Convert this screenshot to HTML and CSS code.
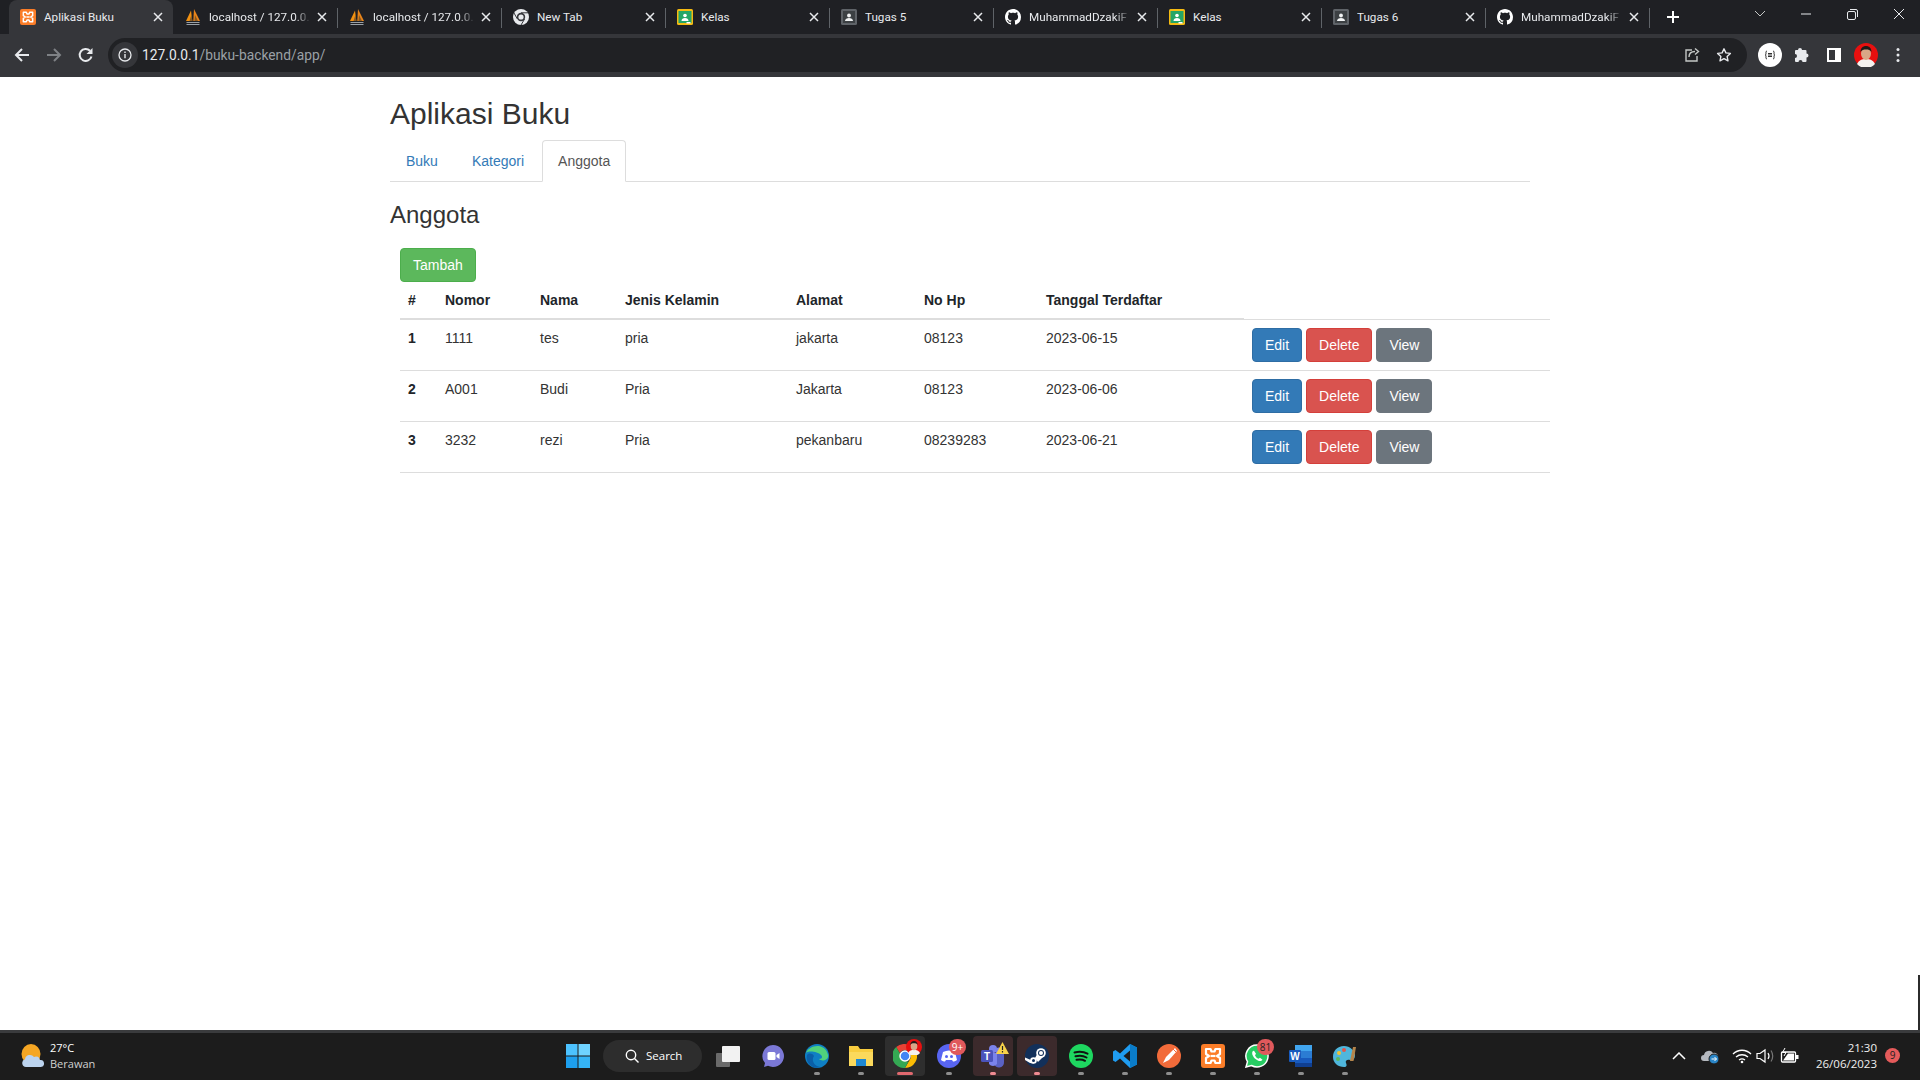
FILE: index.html
```html
<!DOCTYPE html>
<html lang="id">
<head>
    <meta charset="UTF-8">
    <title>Aplikasi Buku</title>
    <link rel="stylesheet" href="styles.css">
</head>
<body>

<svg class="defs" width="0" height="0">
    <defs>
        <symbol id="i-xampp" viewBox="0 0 24 24">
            <rect width="24" height="24" rx="3" fill="#fb7d28"/>
            <path d="M5 5h4.500l1 2.500h3l1-2.500H19v5l-3 2 3 2v5h-4.500l-1-2.500h-3l-1 2.500H5v-5l3-2-3-2z" fill="none" stroke="#fff" stroke-width="2.200" stroke-linejoin="round"/>
            <path d="M9.500 12h5" stroke="#fff" stroke-width="2.200"/>
        </symbol>
        <symbol id="i-pma" viewBox="0 0 16 16">
            <path d="M1 12 6 1.500 7.300 12z" fill="#f29111"/>
            <path d="M8.300 12 9 0l6 12z" fill="#e8841a"/>
            <path d="M4.500 12 6.500 5.500 7.300 12zM9.500 12 10 6l3 6z" fill="#8a5a20"/>
            <path d="M1.500 13h13v1H1.500zM1.500 15h13v1H1.500z" fill="#9aa0a6"/>
        </symbol>
        <symbol id="i-newtab" viewBox="0 0 16 16">
            <circle cx="8" cy="8" r="8" fill="#e8eaed"/>
            <circle cx="8" cy="8" r="4.200" fill="#35363a"/>
            <circle cx="8" cy="8" r="2.600" fill="#e8eaed"/>
            <path d="M8 3.800h7M4.400 10 1 4M11.600 10 8 16" stroke="#35363a" stroke-width="1"/>
        </symbol>
        <symbol id="i-kelas" viewBox="0 0 16 16">
            <rect width="16" height="16" rx="1.500" fill="#f5bb12"/>
            <rect x="1.500" y="2" width="13" height="12" fill="#25a667"/>
            <circle cx="8" cy="6.500" r="1.800" fill="#fff"/>
            <path d="M4.500 12c0-2 1.500-3 3.500-3s3.500 1 3.500 3z" fill="#fff"/>
            <rect x="9.500" y="13" width="4" height="1.500" fill="#fff"/>
        </symbol>
        <symbol id="i-tugas" viewBox="0 0 16 16">
            <rect width="16" height="16" rx="1.500" fill="#5f6368"/>
            <rect x="2" y="2" width="12" height="12" fill="#3c4043"/>
            <circle cx="8" cy="6.500" r="1.900" fill="#f1f3f4"/>
            <path d="M4 12c0-2 2-3 4-3s4 1 4 3z" fill="#f1f3f4"/>
        </symbol>
        <symbol id="i-github" viewBox="0 0 16 16">
            <path fill="#fff" d="M8 0C3.580 0 0 3.580 0 8c0 3.540 2.290 6.530 5.470 7.590.4.070.55-.170.55-.380 0-.190-.010-.820-.010-1.490-2.010.370-2.530-.490-2.690-.940-.090-.230-.480-.940-.820-1.130-.280-.150-.680-.520-.010-.530.630-.010 1.080.580 1.230.820.720 1.210 1.870.870 2.330.660.070-.520.280-.870.510-1.070-1.780-.2-3.640-.890-3.640-3.950 0-.870.310-1.590.820-2.150-.080-.2-.360-1.020.080-2.120 0 0 .670-.210 2.200.820.640-.180 1.320-.270 2-.270.680 0 1.360.090 2 .270 1.530-1.040 2.200-.820 2.200-.820.440 1.100.160 1.920.080 2.120.510.560.820 1.270.820 2.150 0 3.070-1.870 3.750-3.650 3.950.290.250.540.730.540 1.480 0 1.070-.010 1.930-.010 2.200 0 .210.150.460.550.380A8.013 8.013 0 0016 8c0-4.420-3.580-8-8-8z"/>
        </symbol>
        <symbol id="i-close" viewBox="0 0 10 10">
            <path d="M1 1l8 8M9 1l-8 8" stroke="#e8eaed" stroke-width="1.500" fill="none"/>
        </symbol>
    </defs>
</svg>

<header class="browser">
    <div class="tabstrip">
        <div class="tab tab-active">
            <svg class="fav"><use href="#i-xampp"/></svg>
            <span class="tab-title">Aplikasi Buku</span>
            <svg class="tab-x"><use href="#i-close"/></svg>
        </div>
        <div class="tab">
            <svg class="fav"><use href="#i-pma"/></svg>
            <span class="tab-title tab-fade">localhost / 127.0.0.</span>
            <svg class="tab-x"><use href="#i-close"/></svg>
        </div>
        <div class="tab tab-sep">
            <svg class="fav"><use href="#i-pma"/></svg>
            <span class="tab-title tab-fade">localhost / 127.0.0.</span>
            <svg class="tab-x"><use href="#i-close"/></svg>
        </div>
        <div class="tab tab-sep">
            <svg class="fav"><use href="#i-newtab"/></svg>
            <span class="tab-title">New Tab</span>
            <svg class="tab-x"><use href="#i-close"/></svg>
        </div>
        <div class="tab tab-sep">
            <svg class="fav"><use href="#i-kelas"/></svg>
            <span class="tab-title">Kelas</span>
            <svg class="tab-x"><use href="#i-close"/></svg>
        </div>
        <div class="tab tab-sep">
            <svg class="fav"><use href="#i-tugas"/></svg>
            <span class="tab-title">Tugas 5</span>
            <svg class="tab-x"><use href="#i-close"/></svg>
        </div>
        <div class="tab tab-sep">
            <svg class="fav"><use href="#i-github"/></svg>
            <span class="tab-title tab-fade">MuhammadDzakiF</span>
            <svg class="tab-x"><use href="#i-close"/></svg>
        </div>
        <div class="tab tab-sep">
            <svg class="fav"><use href="#i-kelas"/></svg>
            <span class="tab-title">Kelas</span>
            <svg class="tab-x"><use href="#i-close"/></svg>
        </div>
        <div class="tab tab-sep">
            <svg class="fav"><use href="#i-tugas"/></svg>
            <span class="tab-title">Tugas 6</span>
            <svg class="tab-x"><use href="#i-close"/></svg>
        </div>
        <div class="tab tab-sep">
            <svg class="fav"><use href="#i-github"/></svg>
            <span class="tab-title tab-fade">MuhammadDzakiF</span>
            <svg class="tab-x"><use href="#i-close"/></svg>
        </div>
        <div class="tab-plus tab-sep">
            <svg width="14" height="14" viewBox="0 0 14 14"><path d="M7 1v12M1 7h12" stroke="#fff" stroke-width="2"/></svg>
        </div>
        <div class="win-controls">
            <svg width="12" height="8" viewBox="0 0 12 8"><path d="M1 1l5 5 5-5" stroke="#c4c7c5" fill="none"/></svg>
            <svg width="10" height="10" viewBox="0 0 10 10"><path d="M0 5h10" stroke="#e8eaed"/></svg>
            <svg width="11" height="11" viewBox="0 0 11 11"><rect x=".5" y="2.500" width="8" height="8" rx="1.500" fill="none" stroke="#e8eaed"/><path d="M3 .5h6a1.500 1.500 0 011.500 1.500v6" fill="none" stroke="#e8eaed"/></svg>
            <svg width="12" height="12" viewBox="0 0 12 12"><path d="M1 1l10 10M11 1L1 11" stroke="#e8eaed"/></svg>
        </div>
    </div>
    <div class="toolbar">
        <div class="tool">
            <svg width="16" height="16" viewBox="0 0 16 16"><path d="M15 8H2M8 2 2 8l6 6" stroke="#e8eaed" stroke-width="2" fill="none"/></svg>
        </div>
        <div class="tool">
            <svg width="16" height="16" viewBox="0 0 16 16"><path d="M1 8h13M8 2l6 6-6 6" stroke="#7e8185" stroke-width="2" fill="none"/></svg>
        </div>
        <div class="tool">
            <svg width="16" height="16" viewBox="0 0 16 16"><path d="M13.500 9.500A6 6 0 1 1 12 3.700" stroke="#e8eaed" stroke-width="2" fill="none"/><path d="M14.500 1v6h-6z" fill="#e8eaed"/></svg>
        </div>
        <div class="omnibox">
            <div class="site-info">
                <svg width="14" height="14" viewBox="0 0 14 14"><circle cx="7" cy="7" r="6" fill="none" stroke="#e8eaed" stroke-width="1.300"/><path d="M7 6v4.200M7 3.400v1.500" stroke="#e8eaed" stroke-width="1.400"/></svg>
            </div>
            <div class="url"><span class="url-host">127.0.0.1</span>/buku-backend/app/</div>
            <div class="tool">
                <svg width="16" height="16" viewBox="0 0 16 16"><path d="M8 3H2v11h11V9" stroke="#c4c7c5" stroke-width="1.400" fill="none"/><path d="M5 10c0-4 3-5.500 6-5.500M11 1.500l3.500 3-3.500 3" stroke="#c4c7c5" stroke-width="1.400" fill="none"/></svg>
            </div>
            <div class="tool">
                <svg width="16" height="16" viewBox="0 0 16 16"><path d="m8 1.800 1.900 4.100 4.500.5-3.300 3 .9 4.400L8 11.600l-4 2.200.9-4.400-3.300-3 4.500-.5z" stroke="#e8eaed" stroke-width="1.400" fill="none" stroke-linejoin="round"/></svg>
            </div>
        </div>
        <div class="toolbar-right">
            <div class="tool">
                <svg width="24" height="24" viewBox="0 0 24 24"><circle cx="12" cy="12" r="12" fill="#fff"/><path d="M9 8c-1.500 0-1 2-1 3s-1 1-1 1 1 0 1 1-.5 3 1 3M15 8c1.500 0 1 2 1 3s1 1 1 1-1 0-1 1 .5 3-1 3" stroke="#333" fill="none"/><path d="M10 10.500h4M10 12h4M10 13.500h4" stroke="#333"/></svg>
            </div>
            <div class="tool">
                <svg width="16" height="16" viewBox="0 0 16 16"><path fill="#e8eaed" d="M6 1a2 2 0 0 1 2 2h3.500a1 1 0 0 1 1 1v2.500a2 2 0 1 1 0 4V14a1 1 0 0 1-1 1H8.500a2 2 0 1 0-4 0H2a1 1 0 0 1-1-1v-3a2 2 0 1 0 0-4V4a1 1 0 0 1 1-1h2a2 2 0 0 1 2-2z"/></svg>
            </div>
            <div class="tool">
                <svg width="14" height="14" viewBox="0 0 14 14"><path d="M1 1h12v12H1z" fill="#35363a" stroke="#fff" stroke-width="2"/><path d="M8 1h5v12H8z" fill="#fff"/></svg>
            </div>
            <div class="tool">
                <svg width="24" height="24" viewBox="0 0 24 24"><circle cx="12" cy="12" r="12" fill="#e8100f"/><path d="M3 21c2-4 5-5 9-5s7 1 9 5a12 12 0 0 1-18 0z" fill="#f4f1ee"/><ellipse cx="12" cy="10.500" rx="5" ry="6.500" fill="#d9a787"/><path d="M6.500 9c0-4 2.500-6 5.500-6s5.500 2 5.500 6c-1.500-2-3-2.500-5.500-2.500S8 7 6.500 9z" fill="#201a18"/></svg>
            </div>
            <div class="tool">
                <svg width="4" height="16" viewBox="0 0 4 16"><circle cx="2" cy="2.500" r="1.500" fill="#e8eaed"/><circle cx="2" cy="8" r="1.500" fill="#e8eaed"/><circle cx="2" cy="13.500" r="1.500" fill="#e8eaed"/></svg>
            </div>
        </div>
    </div>
</header>

<main class="page">
    <div class="container">
        <h1>Aplikasi Buku</h1>
        <ul class="nav-tabs">
            <li><a>Buku</a></li>
            <li><a>Kategori</a></li>
            <li class="active"><a>Anggota</a></li>
        </ul>
        <h2>Anggota</h2>
        <div class="member-panel">
            <button class="btn btn-success">Tambah</button>
            <table class="table">
                <colgroup>
                    <col class="col-no">
                    <col class="col-nomor">
                    <col class="col-nama">
                    <col class="col-jk">
                    <col class="col-alamat">
                    <col class="col-hp">
                    <col class="col-tgl">
                    <col class="col-aksi">
                </colgroup>
                <thead>
                    <tr>
                        <th>#</th>
                        <th>Nomor</th>
                        <th>Nama</th>
                        <th>Jenis Kelamin</th>
                        <th>Alamat</th>
                        <th>No Hp</th>
                        <th>Tanggal Terdaftar</th>
                    </tr>
                </thead>
                <tbody>
                    <tr>
                        <th>1</th>
                        <td>1111</td>
                        <td>tes</td>
                        <td>pria</td>
                        <td>jakarta</td>
                        <td>08123</td>
                        <td>2023-06-15</td>
                        <td>
                            <button class="btn btn-primary">Edit</button>
                            <button class="btn btn-danger">Delete</button>
                            <button class="btn btn-secondary">View</button>
                        </td>
                    </tr>
                    <tr>
                        <th>2</th>
                        <td>A001</td>
                        <td>Budi</td>
                        <td>Pria</td>
                        <td>Jakarta</td>
                        <td>08123</td>
                        <td>2023-06-06</td>
                        <td>
                            <button class="btn btn-primary">Edit</button>
                            <button class="btn btn-danger">Delete</button>
                            <button class="btn btn-secondary">View</button>
                        </td>
                    </tr>
                    <tr>
                        <th>3</th>
                        <td>3232</td>
                        <td>rezi</td>
                        <td>Pria</td>
                        <td>pekanbaru</td>
                        <td>08239283</td>
                        <td>2023-06-21</td>
                        <td>
                            <button class="btn btn-primary">Edit</button>
                            <button class="btn btn-danger">Delete</button>
                            <button class="btn btn-secondary">View</button>
                        </td>
                    </tr>
                </tbody>
            </table>
        </div>
    </div>
    <div class="edge-strip"></div>
</main>

<footer class="taskbar">
    <div class="weather">
        <svg width="24" height="24" viewBox="0 0 24 24">
            <ellipse cx="11" cy="10" rx="9.500" ry="10" fill="#f5a623"/>
            <path d="M6 23a4 4 0 0 1-1-7.800A5 5 0 0 1 14 13a4 4 0 0 1 6 3 3.500 3.500 0 0 1 1 7z" fill="#bcd3ee"/>
        </svg>
        <div class="weather-text">
            <div>27°C</div>
            <div class="weather-sub">Berawan</div>
        </div>
    </div>
    <svg class="win-logo" width="24" height="24" viewBox="0 0 24 24">
        <path d="M0 0h11.500v11.500H0z" fill="#4cc2ff"/>
        <path d="M12.500 0H24v11.500H12.500z" fill="#6fd3ff"/>
        <path d="M0 12.500h11.500V24H0z" fill="#1d9fee"/>
        <path d="M12.500 12.500H24V24H12.500z" fill="#35b4f5"/>
    </svg>
    <div class="search-pill">
        <svg width="14" height="14" viewBox="0 0 14 14"><circle cx="6" cy="6" r="4.700" fill="none" stroke="#fff" stroke-width="1.400"/><path d="m9.500 9.500 4 4" stroke="#fff" stroke-width="1.400"/></svg>
        <span>Search</span>
    </div>
    <div class="apps">
        <div class="app">
            <svg width="26" height="24" viewBox="0 0 26 24"><rect x="0" y="9" width="14" height="14" rx="1" fill="#6a6a6a"/><rect x="6" y="2" width="18" height="16" rx="1" fill="#f2f2f2"/></svg>
        </div>
        <div class="app">
            <svg width="24" height="24" viewBox="0 0 24 24"><path d="M12 1a11 11 0 1 1-5 20.800L3 23l1-4A11 11 0 0 1 12 1z" fill="#7b78d6"/><rect x="6.500" y="8" width="8" height="8" rx="1.500" fill="#fff"/><path d="m15.500 11 3-2v6l-3-2z" fill="#fff"/></svg>
        </div>
        <div class="app running">
            <svg width="24" height="24" viewBox="0 0 24 24"><circle cx="12" cy="12" r="12" fill="#0f7fc4"/><path d="M1 9C4 1 20-2 23 11c1 5-6 7-9 4 3 0 4-2 2-4-3-3-12-5-15-2z" fill="#50d27c"/><path d="M9 12c-3 4 0 10 6 11-8 3-15-5-13-12 2-2 5-2 7 1z" fill="#0a5fa8"/></svg>
        </div>
        <div class="app running">
            <svg width="24" height="24" viewBox="0 0 24 24"><path d="M0 2h9l2 3h13v17H0z" fill="#f8cd3f"/><path d="M0 8h24v14H0z" fill="#fbd95c"/><rect x="7" y="15" width="10" height="7" fill="#1e88d2"/></svg>
        </div>
        <div class="app app-active running-wide">
            <svg width="24" height="24" viewBox="0 0 24 24">
                <path d="M12 0a12 12 0 0 1 10.400 6H12a6 6 0 0 0-5.200 3L3.200 3A12 12 0 0 1 12 0z" fill="#e94235"/>
                <path d="M22.400 6A12 12 0 0 1 12 24l5.200-9A6 6 0 0 0 17 9z" fill="#fbbc04"/>
                <path d="M12 24A12 12 0 0 1 3.200 3l5.200 9a6 6 0 0 0 7 5.500z" fill="#34a853"/>
                <circle cx="12" cy="12" r="5" fill="#4285f4" stroke="#fff" stroke-width="1.500"/>
            </svg>
            <svg class="app-avatar" width="16" height="16" viewBox="0 0 24 24"><circle cx="12" cy="12" r="12" fill="#e8100f"/><path d="M3 21c2-4 5-5 9-5s7 1 9 5a12 12 0 0 1-18 0z" fill="#f4f1ee"/><ellipse cx="12" cy="10.500" rx="5" ry="6.500" fill="#d9a787"/><path d="M6.500 9c0-4 2.500-6 5.500-6s5.500 2 5.500 6c-1.500-2-3-2.500-5.500-2.500S8 7 6.500 9z" fill="#201a18"/></svg>
        </div>
        <div class="app running">
            <svg width="24" height="24" viewBox="0 0 24 24"><circle cx="12" cy="12" r="12" fill="#5865f2"/><path d="M6 8c4-2 8-2 12 0l2 8c-1.500 1-3 1.500-4 1.500l-1-1.500h-6l-1 1.500c-1 0-2.500-.5-4-1.500z" fill="#fff"/><circle cx="9.500" cy="12.500" r="1.500" fill="#5865f2"/><circle cx="14.500" cy="12.500" r="1.500" fill="#5865f2"/></svg>
            <span class="app-badge">9+</span>
        </div>
        <div class="app app-alert running">
            <svg width="24" height="24" viewBox="0 0 24 24"><circle cx="18" cy="7" r="3.500" fill="#7b83eb"/><path d="M11 10h12v8a5 5 0 0 1-10 1z" fill="#5a62c4"/><circle cx="12" cy="5" r="4" fill="#7b83eb"/><path d="M8 9h8v11a5 5 0 0 1-8 0z" fill="#7b83eb"/><rect x="0" y="6" width="12" height="12" rx="1.500" fill="#4b53bc"/><text x="6" y="15.500" class="app-letter">T</text></svg>
            <svg class="app-warn" width="13" height="12" viewBox="0 0 13 12"><path d="M6.500 0 13 12H0z" fill="#f8d24a"/><path d="M6.500 4v4M6.500 9v1.500" stroke="#222" stroke-width="1.200"/></svg>
        </div>
        <div class="app app-alert running">
            <svg width="24" height="24" viewBox="0 0 24 24"><circle cx="12" cy="12" r="12" fill="#12305a"/><path d="M0 13.500 7 16.500 9 19.500 5 19 0 16z" fill="#fff"/><path d="m10 14 4-7 4 6-5 5z" fill="#fff"/><circle cx="8.500" cy="16.500" r="3.300" fill="#fff"/><circle cx="8.500" cy="16.500" r="1.500" fill="#12305a"/><circle cx="16" cy="9" r="4.800" fill="#fff"/><circle cx="16" cy="9" r="3" fill="#12305a"/><circle cx="16" cy="9" r="2" fill="#fff"/></svg>
        </div>
        <div class="app running">
            <svg width="24" height="24" viewBox="0 0 24 24"><circle cx="12" cy="12" r="12" fill="#1ed760"/><path d="M5.500 8.500c4-1 9-1 13 1.200M6.500 12.300c3.500-.8 8-.6 11 1.200M7.500 15.800c3-.6 6-.5 8.500 1" stroke="#111" stroke-width="2" fill="none" stroke-linecap="round"/></svg>
        </div>
        <div class="app running">
            <svg width="24" height="24" viewBox="0 0 24 24"><path d="M17 0 24 3.500v17L17 24 7 14.500 2.500 18 0 16.500V7.500L2.500 6 7 9.500z" fill="#1f9cf0"/><path d="M17 6.500 10.500 12l6.500 5.500z" fill="#1c1c1c"/><path d="M17 0 24 3.500v17L17 24z" fill="#0a7cc9"/></svg>
        </div>
        <div class="app running">
            <svg width="24" height="24" viewBox="0 0 24 24"><circle cx="12" cy="12" r="12" fill="#f26b3a"/><path d="M18 4 9 13l-3 6 6-3 8-9z" fill="#fff"/><path d="M16 5l3 3" stroke="#f26b3a"/></svg>
        </div>
        <div class="app running">
            <svg width="24" height="24"><use href="#i-xampp"/></svg>
        </div>
        <div class="app running">
            <svg width="24" height="24" viewBox="0 0 24 24"><path d="M12 1a11 11 0 1 1-5.500 20.500L1 23l1.500-5.300A11 11 0 0 1 12 1z" fill="#27cc63" stroke="#fff" stroke-width="1.500"/><path d="M8 7c-2 2 0 6 2.500 8s5.500 3 7 .8l-2.500-2-1.500 1c-1.500-.5-3-2-3.500-3.500l1-1.500-2-3z" fill="#fff"/></svg>
            <span class="app-badge app-badge-wa">81</span>
        </div>
        <div class="app running">
            <svg width="24" height="24" viewBox="0 0 24 24"><path d="M6 1h17v22H6z" fill="#2b7cd3"/><path d="M6 1h17v6H6z" fill="#41a5ee"/><path d="M6 14h17v5H6z" fill="#185abd"/><path d="M6 19h17v4H6z" fill="#103f91"/><rect x="0" y="6" width="12" height="12" rx="1" fill="#185abd"/><text x="6" y="15.500" class="app-letter">W</text></svg>
        </div>
        <div class="app running">
            <svg width="24" height="24" viewBox="0 0 24 24"><path d="M11 2C4 2 0 7 0 13s5 10 11 10c3 0 3-2 2-4s1-4 4-3 5-1 5-5-5-9-11-9z" fill="#4fb6dc"/><circle cx="6" cy="9" r="2" fill="#f1c232"/><circle cx="11" cy="6" r="2" fill="#e2574c"/><circle cx="5" cy="15" r="2" fill="#5cb85c"/><path d="M20 3l-3 14h3.500L23 3z" fill="#b5854b"/></svg>
        </div>
    </div>
    <div class="tray">
        <svg class="tray-chevron" width="14" height="8" viewBox="0 0 14 8"><path d="M1 7l6-6 6 6" stroke="#fff" stroke-width="1.500" fill="none"/></svg>
        <svg class="tray-cloud" width="20" height="18" viewBox="0 0 20 18"><path d="M3 14a3 3 0 0 1 0-6 5 5 0 0 1 9-2 4 4 0 0 1 5 5v3z" fill="#b5b9bf"/><circle cx="13" cy="12" r="5" fill="#2a86c8" stroke="#1c1c1c"/><path d="M10.500 12h5M13.500 10l2 2-2 2" stroke="#fff" fill="none"/></svg>
        <svg class="tray-wifi" width="20" height="16" viewBox="0 0 20 16"><path d="M1 6c5-5 13-5 18 0M4 9c3.500-3 8.500-3 12 0M7 12c2-1.500 4-1.500 6 0" stroke="#fff" stroke-width="1.300" fill="none"/><circle cx="10" cy="14" r="1.300" fill="#fff"/></svg>
        <svg class="tray-vol" width="20" height="16" viewBox="0 0 20 16"><path d="M1 5.500h3L9 2v12L4 10.500H1z" stroke="#fff" stroke-width="1.200" fill="none"/><path d="M12 5c1.200 1.800 1.200 4.200 0 6" stroke="#fff" stroke-width="1.200" fill="none"/><path d="M15 2.500c2.200 3.500 2.200 7.500 0 11" stroke="#777" stroke-width="1.200" fill="none"/></svg>
        <svg class="tray-batt" width="20" height="16" viewBox="0 0 20 16"><rect x="1.500" y="4" width="14" height="10" rx="1" fill="none" stroke="#fff" stroke-width="1.300"/><path d="M3 12.500 8 5.500h6v7z" fill="#fff"/><rect x="16" y="7" width="2.500" height="4" fill="#fff"/><path d="M5 0 2.500 4.500H6L4 8" stroke="#fff" fill="none"/></svg>
        <div class="clock">
            <div>21:30</div>
            <div>26/06/2023</div>
        </div>
        <span class="notif">9</span>
    </div>
</footer>

</body>
</html>
```

FILE: styles.css
```css
* {
    margin: 0; padding: 0; box-sizing: border-box;
}

html, body {
    height: 100%;
}

body {
    display: flex;
    flex-direction: column;
    height: 100vh;
    overflow: hidden;
    background: #fff;
    font-family: "Liberation Sans", Arial, sans-serif;
    font-size: 14px;
    line-height: 20px;
    color: #333;
}

.defs {
    position: absolute;
}

/* browser frame */
.browser {
    flex: none;
    height: 77px;
    font-family: Roboto, "Noto Sans", sans-serif;
    color: #e8eaed;
}

.tabstrip {
    display: flex;
    height: 34px;
    padding-left: 9px;
    background: #1f2024;
}

.tab {
    position: relative;
    display: flex;
    align-items: center;
    flex: none;
    width: 164px;
    height: 34px;
    padding: 0 10px 0 12px;
    font-size: 11.7px;
}

.tab-active {
    padding-left: 11px;
    background: #35363a;
    border-radius: 8px 8px 0 0;
}

.tab-sep::before {
    content: "";
    position: absolute;
    left: 0;
    top: 8px;
    width: 1px;
    height: 20px;
    background: #5f6368;
}

.fav {
    flex: none;
    width: 16px;
    height: 16px;
}

.tab-title {
    flex: 1;
    min-width: 0;
    margin-left: 8px;
    overflow: hidden;
    white-space: nowrap;
}

.tab-fade {
    -webkit-mask-image: linear-gradient(to right, #000 84%, transparent 100%);
    mask-image: linear-gradient(to right, #000 84%, transparent 100%);
}

.tab-x {
    flex: none;
    width: 10px;
    height: 10px;
    margin-left: 6px;
}

.tab-plus {
    position: relative;
    display: flex;
    align-items: center;
    justify-content: center;
    flex: none;
    width: 48px;
}

.win-controls {
    display: flex;
    align-items: center;
    justify-content: space-between;
    height: 28px;
    width: 153px;
    margin-left: 57px;
    padding-right: 2px;
}

.toolbar {
    display: flex;
    align-items: center;
    height: 43px;
    padding: 4px 0 5px 6px;
    background: #35363a;
}

.tool {
    display: flex;
    align-items: center;
    justify-content: center;
    flex: none;
    width: 32px;
    height: 32px;
}

.omnibox {
    display: flex;
    align-items: center;
    width: 1639px;
    height: 34px;
    margin-left: 6px;
    padding: 0 7px 0 4px;
    background: #202124;
    border-radius: 17px;
}

.site-info {
    display: flex;
    align-items: center;
    justify-content: center;
    flex: none;
    width: 26px;
    height: 26px;
    background: #35363a;
    border-radius: 50%;
}

.url {
    flex: 1;
    margin-left: 4px;
    font-size: 13.8px;
    color: #9aa0a6;
}

.url-host {
    color: #e8eaed;
}

.toolbar-right {
    display: flex;
    align-items: center;
    margin-left: 7px;
}

/* page */
.page {
    position: relative;
    flex: 1;
    min-height: 0;
}

.container {
    width: 1140px;
    margin: 0 auto;
}

h1 {
    margin: 20px 0 10px;
    font-size: 30px;
    font-weight: 500;
    line-height: 33px;
}

h2 {
    margin: 20px 0 20px;
    font-size: 24px;
    font-weight: 500;
    line-height: 26px;
}

.nav-tabs {
    display: flex;
    height: 42px;
    list-style: none;
    border-bottom: 1px solid #ddd;
}

.nav-tabs li {
    margin-right: 2px;
}

.nav-tabs a {
    display: block;
    height: 42px;
    padding: 10px 15px;
    color: #337ab7;
    border: 1px solid transparent;
    border-radius: 4px 4px 0 0;
}

.nav-tabs .active a {
    color: #555;
    background: #fff;
    border-color: #ddd;
    border-bottom-color: #fff;
}

.member-panel {
    width: 1150px;
    margin-left: 10px;
}

.btn {
    display: inline-block;
    padding: 6px 12px;
    font-family: inherit;
    font-size: 14px;
    line-height: 20px;
    color: #fff;
    border: 1px solid transparent;
    border-radius: 4px;
    vertical-align: top;
}

.btn-success { background: #5cb85c; border-color: #4cae4c; }
.btn-primary { background: #337ab7; border-color: #2e6da4; }
.btn-danger { background: #d9534f; border-color: #d43f3a; }
.btn-secondary { background: #6c757d; border-color: #6c757d; }

.table {
    width: 1150px;
    table-layout: fixed;
    border-collapse: collapse;
}

.table th, .table td {
    padding: 8px;
    text-align: left;
    vertical-align: top;
}

.table th {
    font-weight: bold;
    color: #212529;
}

.table thead th {
    border-bottom: 2px solid #ddd;
}

.table tbody th, .table tbody td {
    border-top: 1px solid #ddd;
}

.table tbody tr:last-child th, .table tbody tr:last-child td {
    border-bottom: 1px solid #ddd;
}

.col-no { width: 37px; }
.col-nomor { width: 95px; }
.col-nama { width: 85px; }
.col-jk { width: 171px; }
.col-alamat { width: 128px; }
.col-hp { width: 122px; }
.col-tgl { width: 206px; }

.edge-strip {
    position: absolute;
    right: 0;
    bottom: 0;
    width: 2px;
    height: 55px;
    background: #2b2b2b;
}

/* windows taskbar */
.taskbar {
    display: flex;
    align-items: center;
    flex: none;
    height: 50px;
    padding-bottom: 2px;
    background: #1c1c1c;
    border-top: 3px solid #3a3b3d;
    font-family: "Open Sans", "Noto Sans", sans-serif;
    font-size: 11px;
    line-height: 16px;
    color: #fff;
}

.weather {
    display: flex;
    align-items: center;
    flex: none;
    width: 566px;
    padding-left: 20px;
}

.weather-text {
    margin-left: 6px;
}

.weather-sub {
    color: #d0d0d0;
}

.win-logo {
    flex: none;
}

.search-pill {
    display: flex;
    align-items: center;
    flex: none;
    width: 99px;
    height: 32px;
    margin-left: 13px;
    padding-left: 22px;
    background: #2d2d2d;
    border-radius: 16px;
    font-size: 11.5px;
}

.search-pill span {
    margin-left: 7px;
}

.apps {
    display: flex;
    flex: none;
    margin-left: 7px;
}

.app {
    position: relative;
    display: flex;
    align-items: center;
    justify-content: center;
    flex: none;
    width: 40px;
    height: 40px;
    margin-right: 4px;
    border-radius: 4px;
}

.app-active {
    background: #2e2e2e;
}

.app-alert {
    background: #3c2a2c;
}

.running::after, .running-wide::after {
    content: "";
    position: absolute;
    left: 17px;
    bottom: 1px;
    width: 6px;
    height: 3px;
    background: #8d8d8d;
    border-radius: 2px;
}

.app-alert::after {
    background: #ef8b92;
}

.running-wide::after {
    left: 12px;
    width: 16px;
    background: #e0696f;
}

.app-avatar {
    position: absolute;
    right: 3px;
    top: 3px;
}

.app-warn {
    position: absolute;
    right: 4px;
    top: 6px;
}

.app-letter {
    font-family: "Liberation Sans", Arial, sans-serif;
    font-size: 10px;
    font-weight: bold;
    fill: #fff;
    text-anchor: middle;
}

.app-badge {
    position: absolute;
    right: 3px;
    top: 3px;
    min-width: 17px;
    height: 16px;
    padding: 0 2px;
    background: #e0595c;
    border-radius: 8px;
    font-size: 10px;
    line-height: 16px;
    text-align: center;
    color: #fff;
}

.app-badge-wa {
    color: #222;
}

.tray {
    display: flex;
    align-items: center;
    flex: none;
    margin-left: auto;
    padding-right: 20px;
}

.tray-cloud { margin-left: 15px; }
.tray-wifi { margin-left: 11px; }
.tray-vol { margin-left: 4px; }
.tray-batt { margin-left: 4px; }

.clock {
    width: 77px;
    font-size: 11.5px;
    text-align: right;
    color: #f0f0f0;
}

.notif {
    display: block;
    width: 15px;
    height: 15px;
    margin-left: 8px;
    background: #e55b5b;
    border-radius: 50%;
    font-size: 10px;
    line-height: 15px;
    text-align: center;
    color: #222;
}
```
